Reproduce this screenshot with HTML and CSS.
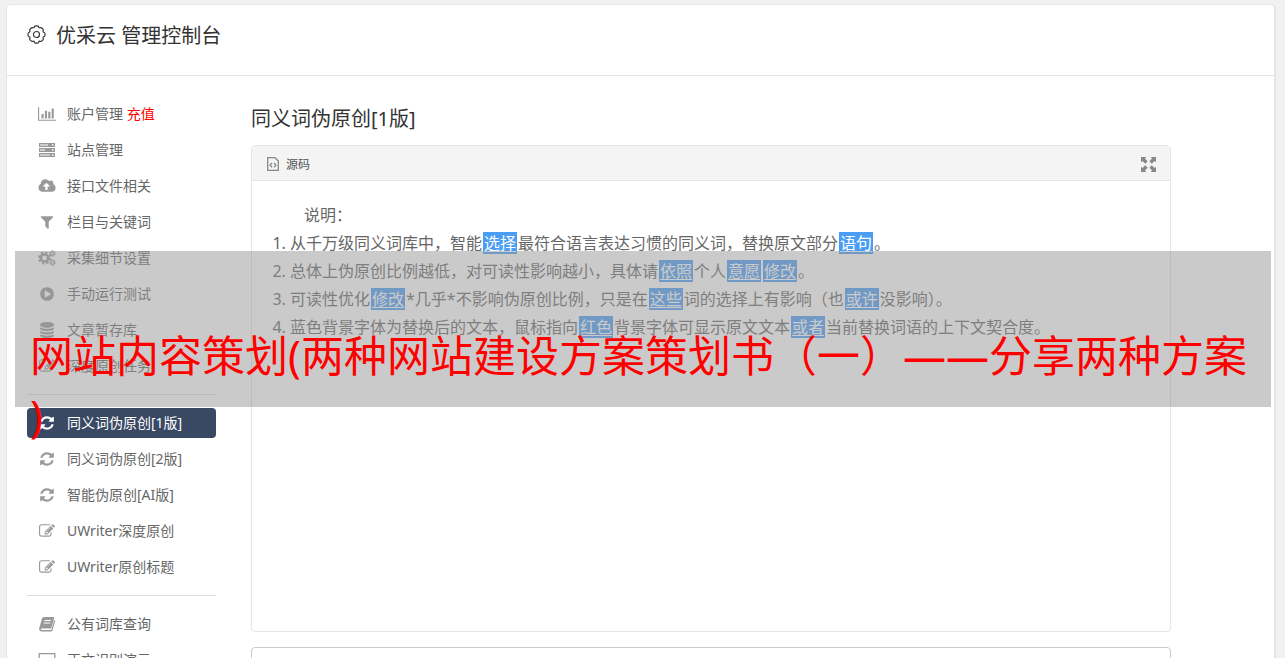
FILE: index.html
```html
<!DOCTYPE html>
<html lang="zh-CN">
<head>
    <meta charset="UTF-8">
    <meta name="viewport" content="width=device-width, initial-scale=1.0">
    <title>优采云 管理控制台</title>
    <link rel="stylesheet" href="styles.css">
</head>
<body>
    <!-- Shared icons -->
    <svg class="sprite" aria-hidden="true">
        <symbol id="i-refresh" viewBox="0 0 1792 1792"><path d="M1639 1056q0 5-1 7-64 268-268 434.500T892 1664q-146 0-282.500-55T366 1452l-129 129q-19 19-45 19t-45-19-19-45v-448q0-26 19-45t45-19h448q26 0 45 19t19 45-19 45l-137 137q71 66 161 102t187 36q134 0 250-65t186-179q11-17 53-117 8-23 30-23h192q13 0 22.500 9.500t9.500 22.500zm25-800v448q0 26-19 45t-45 19h-448q-26 0-45-19t-19-45 19-45l138-138Q1097 384 896 384q-134 0-250 65T460 628q-11 17-53 117-8 23-30 23H178q-13 0-22.500-9.500T146 736v-7q65-268 270-434.500T896 128q146 0 284 55.500T1425 340l130-129q19-19 45-19t45 19 19 45z"/></symbol>
        <symbol id="i-edit" viewBox="0 0 1792 1792"><path d="M888 1184l116-116-152-152-116 116v56h96v96h56zm440-720q-16-16-33 1L945 815q-17 17-1 33t33-1l350-350q17-17 1-33zm80 594v190q0 119-84.500 203.500T1120 1536H288q-119 0-203.500-84.500T0 1248V416q0-119 84.500-203.500T288 128h832q63 0 117 25 15 7 18 23 3 17-9 29l-49 49q-14 14-32 8-23-6-45-6H288q-66 0-113 47t-47 113v832q0 66 47 113t113 47h832q66 0 113-47t47-113v-126q0-13 9-22l64-64q15-15 35-7t20 29zm-96-738l288 288-672 672H640V992zm444 132l-92 92-288-288 92-92q28-28 68-28t68 28l152 152q28 28 28 68t-28 68z"/></symbol>
    </svg>

    <div class="container">
        <header class="header">
            <svg class="gear" viewBox="0 0 20 20" fill="none" stroke="currentColor" stroke-width="1.200" stroke-linejoin="round">
                <path d="M8.200 1.200q1.800-.6 3.600 0l.9 1.700 2-.3q1.600.9 2.500 2.500l-.4 2 1.900 1.200q.5 1.800 0 3.400l-1.900 1.200.4 2q-.9 1.600-2.500 2.500l-2-.4-.9 1.800q-1.800.6-3.600 0l-.9-1.800-2 .4q-1.600-.9-2.500-2.500l.4-2-1.900-1.200q-.5-1.600 0-3.400l1.900-1.200-.4-2q.9-1.600 2.500-2.500l2 .3z"/>
                <circle cx="10" cy="10" r="3.200"/>
            </svg>
            <h1>优采云 管理控制台</h1>
        </header>

        <div class="content">
            <nav class="sidebar">
                <a href="#"><svg viewBox="0 0 2048 1792"><path d="M640 896v512H400V896h240zm384-384v896H784V512h240zm1024 1024v128H0V128h128v1408h1920zm-640-896v768h-240V640h240zm384-384v1152h-240V256h240z"/></svg><span>账户管理 <em>充值</em></span></a>
                <a href="#"><svg viewBox="0 0 18 16"><path fill-rule="evenodd" d="M1 1h16v4H1zM2 2.500v1h8v-1zM14 2.200v1.500h1.500V2.200zM1 6h16v4H1zM2 7.500v1h5v-1zM14 7.200v1.500h1.500V7.200zM1 11h16v4H1zM2 12.500v1h10v-1zM14 12.200v1.500h1.500v-1.500z"/></svg><span>站点管理</span></a>
                <a href="#"><svg viewBox="0 0 1920 1792"><path d="M1280 928q0-14-9-23L919 553q-9-9-23-9t-23 9L522 904q-10 12-10 24 0 14 9 23t23 9h224v352q0 13 9.500 22.500t22.500 9.500h192q13 0 22.500-9.500t9.500-22.500V960h224q13 0 22.500-9.500t9.500-22.500zm640 224q0 159-112.500 271.500T1536 1536H448q-185 0-316.500-131.500T0 1088q0-130 70-240t188-165q-2-30-2-43 0-212 150-362t362-150q156 0 285.500 87T1242 346q71-62 166-62 106 0 181 75t75 181q0 76-41 138 130 31 213.500 135.500T1920 1152z" fill-rule="evenodd"/></svg><span>接口文件相关</span></a>
                <a href="#"><svg viewBox="0 0 1792 1792"><path d="M1595 295q17 41-14 70l-493 493v742q0 42-39 59-13 5-25 5-27 0-45-19l-256-256q-19-19-19-45V858L211 365q-31-29-14-70 17-39 59-39h1280q42 0 59 39z"/></svg><span>栏目与关键词</span></a>
                <a href="#"><svg viewBox="0 0 18 16" fill="none" stroke="currentColor"><g><circle cx="6.500" cy="8" r="3.700" stroke-width="2.600"/><circle cx="6.500" cy="8" r="5.700" stroke-width="1.800" stroke-dasharray="2.240 2.240"/><circle cx="14.500" cy="3.500" r="1.800" stroke-width="1.300"/><circle cx="14.500" cy="3.500" r="2.800" stroke-width="1" stroke-dasharray="1.460 1.460"/><circle cx="14.500" cy="12.500" r="1.800" stroke-width="1.300"/><circle cx="14.500" cy="12.500" r="2.800" stroke-width="1" stroke-dasharray="1.460 1.460"/></g></svg><span>采集细节设置</span></a>
                <a href="#"><svg viewBox="0 0 1792 1792"><path fill-rule="evenodd" d="M896 128q209 0 385.500 103T1561 510.500 1664 896t-103 385.500-279.500 279.500T896 1664t-385.500-103T231 1281.500 128 896t103-385.500T510.500 231 896 128zm384 823q32-18 32-55t-32-55L736 521q-31-19-64-1-32 19-32 56v640q0 37 32 56 16 8 32 8 17 0 32-9z"/></svg><span>手动运行测试</span></a>
                <a href="#"><svg viewBox="0 0 1792 1792"><path d="M896 768q237 0 443-43t325-127v170q0 69-103 128t-280 93.500-385 34.500-385-34.500T231 896 128 768V598q119 84 325 127t443 43zm0 768q237 0 443-43t325-127v170q0 69-103 128t-280 93.500-385 34.500-385-34.500-280-93.500-103-128v-170q119 84 325 127t443 43zm0-384q237 0 443-43t325-127v170q0 69-103 128t-280 93.500-385 34.500-385-34.500-280-93.500-103-128V982q119 84 325 127t443 43zM896 0q208 0 385 34.500t280 93.500 103 128v128q0 69-103 128t-280 93.500T896 640t-385-34.500T231 512 128 384V256q0-69 103-128t280-93.500T896 0z"/></svg><span>文章暂存库</span></a>
                <a href="#"><svg><use href="#i-edit"/></svg><span>深度原创任务</span></a>
                <hr>
                <a href="#" class="active"><svg><use href="#i-refresh"/></svg><span>同义词伪原创[1版]</span></a>
                <a href="#"><svg><use href="#i-refresh"/></svg><span>同义词伪原创[2版]</span></a>
                <a href="#"><svg><use href="#i-refresh"/></svg><span>智能伪原创[AI版]</span></a>
                <a href="#"><svg><use href="#i-edit"/></svg><span>UWriter深度原创</span></a>
                <a href="#"><svg><use href="#i-edit"/></svg><span>UWriter原创标题</span></a>
                <hr>
                <a href="#"><svg viewBox="0 0 18 16"><path fill-rule="evenodd" d="M6 1h9.500q1 0 .7 1l-2.700 9.500q-.3 1-1.300 1H3.600q-1 0-.8.800.2.700 1 .7h9.200l.5-.5L16.300 4l.7.500q.3.400.1 1l-2.700 9q-.3 1-1.300 1H3.500q-1.800 0-2.300-1.800-.2-.9.100-1.700L4 2.500Q4.500 1 6 1zM6.600 4l-.3 1h6.500l.3-1zM5.900 6.500l-.3 1h6.500l.3-1z"/></svg><span>公有词库查询</span></a>
                <a href="#"><svg viewBox="0 0 18 16"><path fill-rule="evenodd" d="M1.500 1h15q1 0 1 1v10q0 1-1 1H11l1 2.500H6L7 13H1.500q-1 0-1-1V2q0-1 1-1zm.3 1.300v8.500h14.400V2.300z"/></svg><span>正文识别演示</span></a>
            </nav>

            <main class="main">
                <h2>同义词伪原创[1版]</h2>
                <section class="panel">
                    <div class="panel-header">
                        <svg class="file" viewBox="0 0 12 14" fill="none" stroke="currentColor"><path stroke-width="1.300" d="M.7.700h7.300l3.300 3.300v9.300H.700z"/><path stroke-width="1.300" d="M5 6L3 8.200l2 2.200M7 6l2 2.200-2 2.200"/></svg>
                        <span>源码</span>
                        <button type="button" class="expand" aria-label="全屏">
                            <svg viewBox="0 0 14 14"><path d="M0 0h5L3.700 1.400l2.500 2.500-2.300 2.300-2.500-2.500L0 5zM14 0v5l-1.400-1.300-2.500 2.500-2.300-2.300 2.500-2.500L9 0zM0 14V9l1.400 1.300 2.500-2.500 2.300 2.300-2.500 2.500L5 14zM14 14H9l1.300-1.400-2.500-2.500 2.300-2.300 2.500 2.500L14 9z"/></svg>
                        </button>
                    </div>
                    <div class="panel-body">
                        <p>说明：</p>
                        <ol>
                            <li>从千万级同义词库中，智能<mark>选择</mark>最符合语言表达习惯的同义词，替换原文部分<mark>语句</mark>。</li>
                            <li>总体上伪原创比例越低，对可读性影响越小，具体请<mark>依照</mark>个人<mark>意愿</mark><mark>修改</mark>。</li>
                            <li>可读性优化<mark>修改</mark>*几乎*不影响伪原创比例，只是在<mark>这些</mark>词的选择上有影响（也<mark>或许</mark>没影响）。</li>
                            <li>蓝色背景字体为替换后的文本，鼠标指向<mark>红色</mark>背景字体可显示原文文本<mark>或者</mark>当前替换词语的上下文契合度。</li>
                        </ol>
                    </div>
                </section>
                <textarea class="source" aria-label="原文"></textarea>
            </main>
        </div>
    </div>

    <div class="banner">网站内容策划(两种网站建设方案策划书（一）——分享两种方案)</div>
</body>
</html>
```
FILE: styles.css
```css
* {
    box-sizing: border-box;
}

body {
    position: relative;
    margin: 0;
    padding: 4px 9px 20px 6px;
    background-color: #f1f1f1;
    color: #666;
    font-family: "Noto Sans", "Noto Sans CJK SC", sans-serif;
    font-size: 14px;
}

h1, h2 {
    margin: 0;
    color: #333;
    font-size: 20px;
    font-weight: 400;
    line-height: 30px;
}

svg {
    flex-shrink: 0;
    fill: currentColor;
}

svg[fill="none"] {
    fill: none;
}

.sprite {
    display: none;
}

.container {
    background-color: white;
    border: 1px solid #e5e5e5;
    border-right-width: 2px;
    border-radius: 5px;
}

.header {
    display: flex;
    align-items: flex-start;
    gap: 10px;
    padding: 16px 20px 24px;
    border-bottom: 1px solid #e5e5e5;
    color: #333;
}

.gear {
    width: 19px;
    height: 19px;
    margin-top: 4px;
}

.content {
    display: flex;
    gap: 35px;
    padding: 23px 103px 20px 20px;
}

/* Sidebar */
.sidebar {
    display: flex;
    flex-direction: column;
    flex: 0 0 189px;
    gap: 6px;
}

.sidebar a {
    display: flex;
    align-items: center;
    gap: 11px;
    padding: 0 11px;
    border-radius: 4px;
    color: #666;
    line-height: 30px;
    text-decoration: none;
}

.sidebar svg {
    width: 18px;
    height: 16px;
    color: #999;
}

.sidebar em {
    color: #f00;
    font-style: normal;
}

.sidebar .active,
.sidebar .active svg {
    color: white;
}

.sidebar .active {
    background-color: #394963;
}

.sidebar hr {
    width: 100%;
    margin: 7px 0;
    border: 0;
    border-top: 1px solid #ddd;
}

/* Main column */
.main {
    flex: 1;
    min-width: 0;
    padding-top: 5px;
}

.panel {
    min-height: 487px;
    margin: 11px 0 15px;
    border: 1px solid #e5e5e5;
    border-radius: 4px;
}

.panel-header {
    display: flex;
    align-items: center;
    gap: 7px;
    height: 35px;
    padding: 2px 14px 0 15px;
    background-color: #f4f4f4;
    border-bottom: 1px solid #e5e5e5;
    color: #555;
    font-size: 12px;
}

.file {
    width: 12px;
    height: 14px;
    color: #888;
}

.expand {
    display: flex;
    margin-left: auto;
    padding: 0;
    border: 0;
    background: none;
    color: #888;
    cursor: pointer;
}

.expand svg {
    width: 15px;
    height: 15px;
}

.panel-body {
    padding: 20px;
    font-size: 16px;
    line-height: 28px;
}

.panel-body p {
    margin: 0;
    text-indent: 2em;
}

.panel-body ol {
    margin: 0;
    padding-left: 18px;
}

.panel-body mark {
    margin: 0 1px;
    padding: 0 1px;
    background-color: #4a9df5;
    color: white;
    text-decoration: underline;
    text-underline-offset: 2px;
    text-decoration-skip-ink: none;
}

.source {
    display: block;
    width: 100%;
    height: 200px;
    border: 1px solid #ccc;
    border-radius: 4px;
    resize: none;
}

/* Headline strip over the page */
.banner {
    position: absolute;
    top: 251px;
    left: 15px;
    right: 14px;
    height: 156px;
    padding: 75px 15px 0;
    background-color: rgba(149, 149, 149, 0.5);
    color: #f00;
    font-size: 43px;
    line-height: 60px;
    line-break: anywhere;
}
```
